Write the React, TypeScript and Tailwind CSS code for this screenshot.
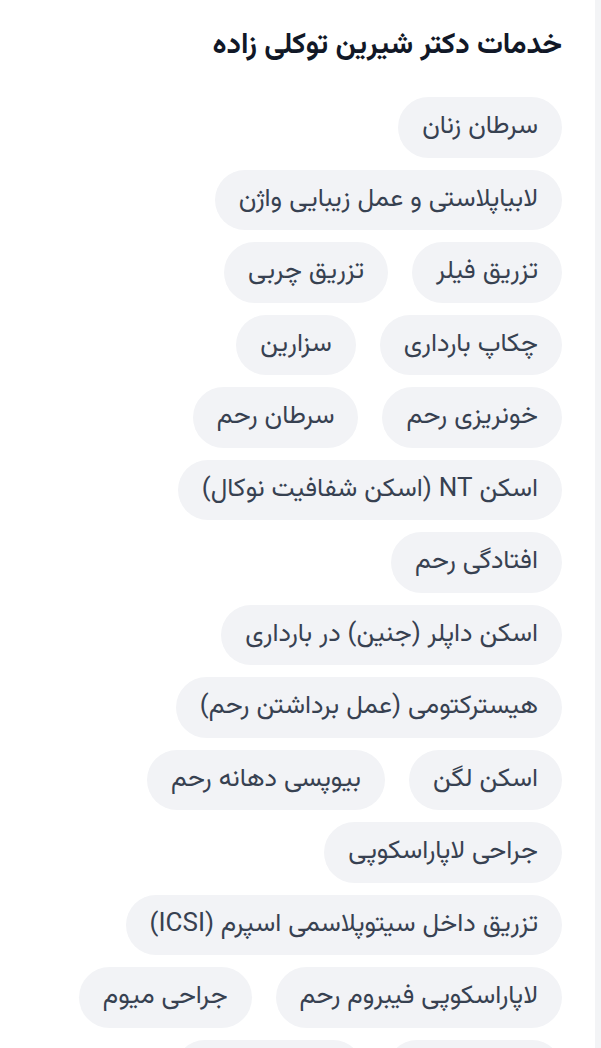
import React from "react";

const rows: string[][] = [
  ["سرطان زنان"],
  ["لابیاپلاستی و عمل زیبایی واژن"],
  ["تزریق فیلر", "تزریق چربی"],
  ["چکاپ بارداری", "سزارین"],
  ["خونریزی رحم", "سرطان رحم"],
  ["اسکن NT (اسکن شفافیت نوکال)"],
  ["افتادگی رحم"],
  ["اسکن داپلر (جنین) در بارداری"],
  ["هیسترکتومی (عمل برداشتن رحم)"],
  ["اسکن لگن", "بیوپسی دهانه رحم"],
  ["جراحی لاپاراسکوپی"],
  ["تزریق داخل سیتوپلاسمی اسپرم (ICSI)"],
  ["لاپاراسکوپی فیبروم رحم", "جراحی میوم"],
  ["کولپوسکوپی", "درمان ناباروری"],
];

export default function App() {
  return (
    <div
      dir="rtl"
      className="flex h-[1048px] w-[601px] overflow-hidden bg-white"
      style={{ fontFamily: '"Vazirmatn", "Noto Sans Arabic", "DejaVu Sans", sans-serif' }}
    >
      <div className="w-[6px] shrink-0 bg-[#f3f4f6]" />
      <div className="flex-1 pr-[33px] pl-[20px] pt-[30px]">
        <h2 className="text-[29px] leading-[32px] font-bold text-[#111827]">
          خدمات دکتر شیرین توکلی زاده
        </h2>
        <div className="mt-[35px] flex flex-col gap-y-3">
          {rows.map((row, i) => (
            <div key={i} className="flex gap-x-6">
              {row.map((s) => (
                <span
                  key={s}
                  className="whitespace-nowrap rounded-full bg-[#f2f3f6] px-6 py-4 text-[26px] leading-[28.5px] text-[#374151]"
                >
                  {s}
                </span>
              ))}
            </div>
          ))}
        </div>
      </div>
    </div>
  );
}
